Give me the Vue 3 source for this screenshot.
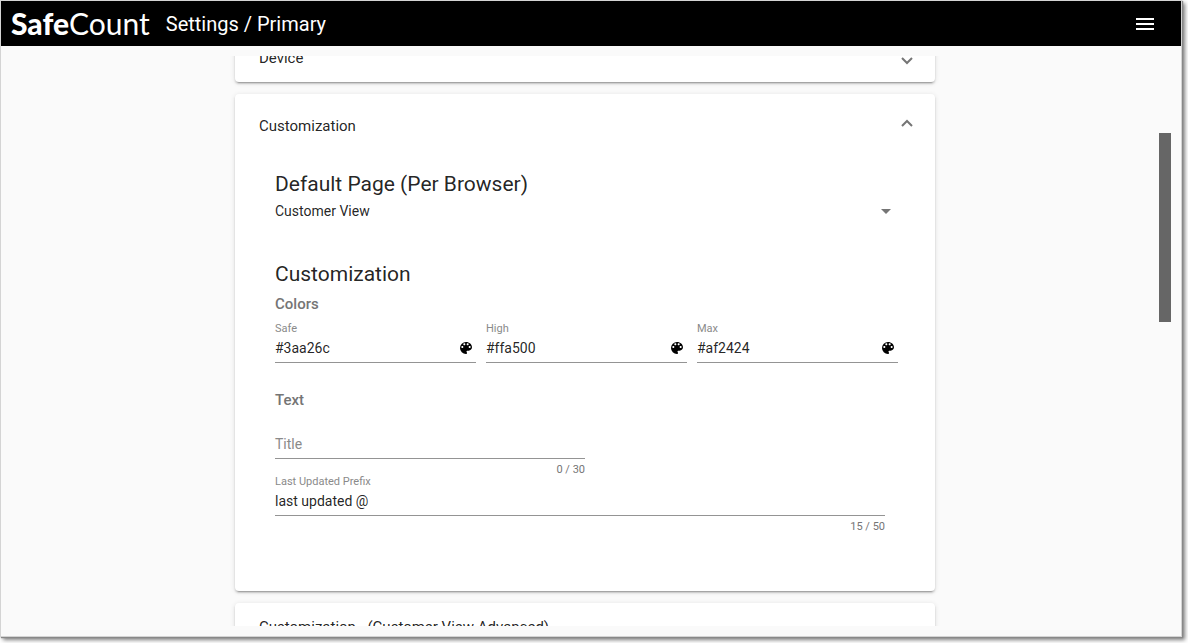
<template>
  <div class="page">
    <div class="window">
      <header class="toolbar">
        <a class="logo" href="#"><b>Safe</b>Count</a>
        <h1 class="page-title">Settings / Primary</h1>
        <button class="menu-btn" type="button" aria-label="Menu">
          <svg width="24" height="24" viewBox="0 0 24 24"><path d="M3 18h18v-2H3v2zm0-5h18v-2H3v2zm0-7v2h18V6H3z" /></svg>
        </button>
      </header>

      <main class="content">
        <div ref="list" class="panel-list">
          <section class="panel">
            <button class="panel-header" type="button" aria-expanded="false">
              <span>Device</span>
              <svg class="chevron" width="12" height="14" viewBox="0 0 12 14"><path d="M1 7l5 5 5-5" /></svg>
            </button>
          </section>

          <section class="panel">
            <button class="panel-header open" type="button" aria-expanded="true">
              <span>Customization</span>
              <svg class="chevron" width="12" height="14" viewBox="0 0 12 14"><path d="M1 7l5-5 5 5" /></svg>
            </button>
            <div class="panel-body">
              <h2><label for="default-page">Default Page (Per Browser)</label></h2>
              <div class="select-box">
                <select id="default-page" v-model="defaultPage">
                  <option>Customer View</option>
                </select>
                <svg class="arrow" width="10" height="5" viewBox="0 0 10 5"><path d="M0 0h10L5 5z" /></svg>
              </div>

              <h2>Customization</h2>
              <h3>Colors</h3>
              <div class="colors">
                <div v-for="color in colors" :key="color.id" class="field">
                  <label :for="color.id">{{ color.label }}</label>
                  <div class="field-row">
                    <input :id="color.id" v-model="color.value" type="text" />
                    <button class="picker-btn" type="button" :aria-label="'Pick ' + color.label + ' color'">
                      <svg width="12" height="12" viewBox="3 3 18 18">
                        <path d="M12 3a9 9 0 0 0 0 18c.83 0 1.500-.67 1.500-1.500 0-.39-.15-.74-.39-1.010-.23-.26-.38-.61-.38-.99 0-.83.67-1.500 1.500-1.500H16c2.760 0 5-2.240 5-5 0-4.420-4.030-8-9-8zm-5.500 9c-.83 0-1.500-.67-1.500-1.500S5.670 9 6.500 9 8 9.670 8 10.500 7.330 12 6.500 12zm3-4C8.670 8 8 7.330 8 6.500S8.670 5 9.500 5s1.500.67 1.500 1.500S10.330 8 9.500 8zm5 0c-.83 0-1.500-.67-1.500-1.500S13.670 5 14.500 5s1.500.67 1.500 1.500S15.330 8 14.500 8zm3 4c-.83 0-1.500-.67-1.500-1.500S16.670 9 17.500 9s1.500.67 1.500 1.500-.67 1.500-1.500 1.500z" />
                      </svg>
                    </button>
                  </div>
                </div>
              </div>

              <h3>Text</h3>
              <div class="field title-field">
                <label for="title" :class="{ resting: !title }">Title</label>
                <div class="field-row">
                  <input id="title" v-model="title" type="text" maxlength="30" />
                </div>
                <span class="counter">{{ title.length }} / 30</span>
              </div>
              <div class="field prefix-field">
                <label for="prefix">Last Updated Prefix</label>
                <div class="field-row">
                  <input id="prefix" v-model="prefix" type="text" maxlength="50" />
                </div>
                <!-- the stored prefix ends with a space -->
                <span class="counter">{{ prefix.length }} / 50</span>
              </div>
            </div>
          </section>

          <section class="panel">
            <button class="panel-header" type="button" aria-expanded="false">
              <span>Customization - (Customer View Advanced)</span>
              <svg class="chevron" width="12" height="14" viewBox="0 0 12 14"><path d="M1 7l5 5 5-5" /></svg>
            </button>
          </section>
        </div>
        <div class="scroll-track"><div class="scroll-thumb"></div></div>
      </main>
    </div>
  </div>
</template>

<script setup>
import { ref, onMounted } from 'vue'

const list = ref(null)
const defaultPage = ref('Customer View')
const title = ref('')
const prefix = ref('last updated @ ')
const colors = ref([
  { id: 'safe', label: 'Safe', value: '#3aa26c' },
  { id: 'high', label: 'High', value: '#ffa500' },
  { id: 'max', label: 'Max', value: '#af2424' }
])

onMounted(() => {
  list.value.scrollTop = 22
})
</script>

<style>
body { margin: 0; background: #fff; }
</style>

<style scoped>
* { box-sizing: border-box; }
.page { display: flex; height: 100vh; padding: 0 6px 6px 0; background: #fff; }
.window { display: flex; flex: 1; flex-direction: column; min-width: 0; border: 1px solid #d4d4d4; background: #fafafa; box-shadow: 1px 1px 1px #888, 3px 3px 4px rgba(0, 0, 0, 0.5); font-family: Roboto, sans-serif; color: rgba(0, 0, 0, 0.87); }
button, input, select { font: inherit; color: inherit; border: 0; padding: 0; margin: 0; background: none; outline: none; border-radius: 0; }
button { cursor: pointer; }
svg { display: block; flex-shrink: 0; }

.toolbar { display: flex; align-items: center; flex-shrink: 0; height: 45px; padding: 0 24px 0 10px; background: #000; color: #fff; }
.logo { font-family: Lato, sans-serif; font-size: 30px; line-height: 42px; padding-bottom: 2px; color: #fff; text-decoration: none; }
.logo b { font-weight: 900; }
.page-title { flex: 1; margin: 0 0 0 16px; font-size: 20px; font-weight: 400; }
.menu-btn svg { fill: #fff; }

.content { display: flex; flex: 1; min-height: 0; padding: 10px; }
.panel-list { flex: 1; overflow-y: auto; scrollbar-width: none; padding-bottom: 24px; }
.scroll-track { width: 12px; padding-top: 77px; }
.scroll-thumb { height: 189px; background: #666; }

.panel { max-width: 700px; margin: 0 auto 12px; border-radius: 4px; background: #fff; box-shadow: 0 3px 1px -2px rgba(0, 0, 0, 0.2), 0 2px 2px rgba(0, 0, 0, 0.14), 0 1px 5px rgba(0, 0, 0, 0.12); }
.panel-header { display: flex; align-items: center; justify-content: space-between; width: 100%; height: 48px; padding: 0 22px 0 24px; font-size: 15px; text-align: left; }
.panel-header.open { height: 64px; }
.chevron { fill: none; stroke: #757575; stroke-width: 2; }
.panel-body { padding: 10px 37px 59px 40px; }

h2 { margin: 0; font-size: 21px; font-weight: 400; line-height: 32px; }
h3 { margin: 4px 0 8px; font-size: 15px; font-weight: 500; line-height: 20px; color: #757575; }
.select-box { display: flex; align-items: center; margin: 1px 7px 37px 0; }
.select-box select { flex: 1; appearance: none; font-size: 14px; line-height: 20px; }
.arrow { fill: #757575; }

.colors { display: grid; grid-template-columns: repeat(3, 1fr); gap: 10px; margin-bottom: 27px; }
.field { display: flex; flex-direction: column; }
.field label { height: 16px; font-size: 11px; line-height: 14px; color: #8a8a8a; }
.field label.resting { position: relative; top: 16px; font-size: 14px; line-height: 20px; }
.field-row { display: flex; align-items: center; padding-bottom: 4px; border-bottom: 1px solid #949494; }
.field-row input { flex: 1; min-width: 0; height: 20px; font-size: 14px; line-height: 20px; }
.picker-btn { margin-right: 4px; }
.counter { height: 16px; font-size: 11px; line-height: 22px; text-align: right; color: #757575; }
.title-field { max-width: 310px; }
.prefix-field { max-width: 610px; }
</style>
